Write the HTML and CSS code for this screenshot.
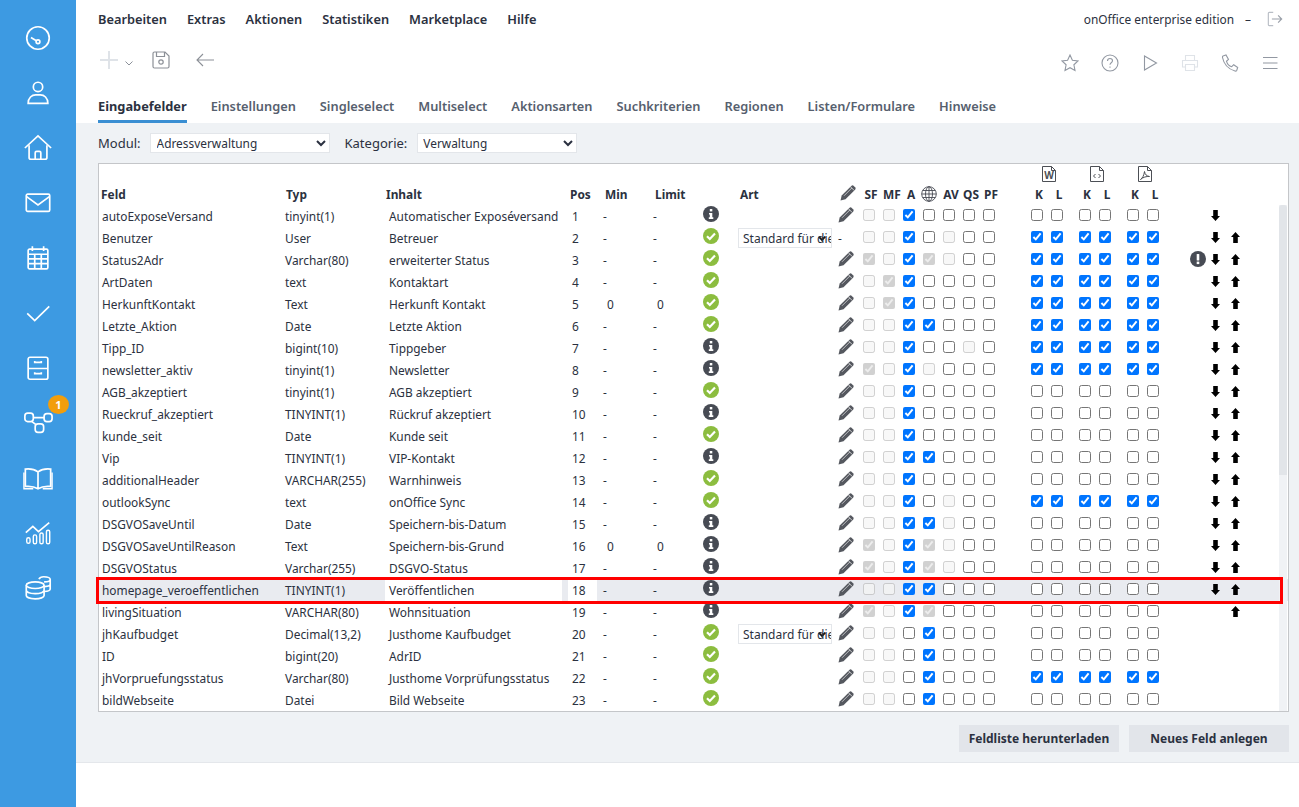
FILE: index.html
```html
<!DOCTYPE html>
<html lang="de">
<head>
  <meta charset="UTF-8">
  <title>Eingabefelder</title>
  <link rel="stylesheet" href="styles.css">
</head>
<body>

<svg class="defs">
  <symbol id="pen" viewBox="0 0 17 17"><path d="M.5 16.500l1.200-5L11.300 1.900a1.800 1.800 0 0 1 2.500 0l1.300 1.300a1.800 1.800 0 0 1 0 2.500L5.500 15.300z" fill="#55585f"/><path d="M4 11.800L11.800 4" stroke="#fff" stroke-width=".6" fill="none"/><path d="M10.500 2.800l3.700 3.700" stroke="#fff" stroke-width=".7"/></symbol>
  <symbol id="info" viewBox="0 0 16 16"><circle cx="8" cy="8" r="8" fill="#474b54"/><rect x="6.800" y="3" width="2.500" height="2.400" fill="#fff"/><path d="M6 7h3.300v4.300H10.300V13H5.800v-1.700h1V8.600H6z" fill="#fff"/></symbol>
  <symbol id="ok" viewBox="0 0 16 16"><circle cx="8" cy="8" r="8" fill="#8cbd3f"/><path d="M4 8.300l2.800 2.700L12 5.600" fill="none" stroke="#fff" stroke-width="2.200"/></symbol>
  <symbol id="warn" viewBox="0 0 16 16"><circle cx="8" cy="8" r="8" fill="#474b54"/><rect x="6.700" y="3" width="2.600" height="6.500" rx=".6" fill="#fff"/><rect x="6.700" y="10.600" width="2.600" height="2.500" fill="#fff"/></symbol>
  <symbol id="down" viewBox="0 0 9 11"><path d="M2.200 0h4.600v6H9L4.500 11 0 6h2.200z"/></symbol>
  <symbol id="up" viewBox="0 0 9 11"><path d="M2.200 11h4.600V5H9L4.500 0 0 5h2.200z"/></symbol>
</svg>

<div class="app">
  <nav class="sidebar">
    <a class="side-item"><svg viewBox="0 0 32 32"><circle cx="16" cy="16" r="12"/><circle cx="16" cy="20" r="2"/><path d="M14.200 19L8.500 15.500"/></svg></a>
    <a class="side-item"><svg viewBox="0 0 32 32"><circle cx="16" cy="9.500" r="5"/><path d="M5.500 27c0-6 4-9 8-9h5c4 0 8 3 8 9z"/></svg></a>
    <a class="side-item"><svg viewBox="0 0 32 32"><path d="M2 16L16 3 30 16"/><path d="M6.500 13v13a2 2 0 0 0 2 2h15a2 2 0 0 0 2-2V13"/><path d="M13 28v-7a1.500 1.500 0 0 1 1.500-1.500h3A1.500 1.500 0 0 1 19 21v7"/></svg></a>
    <a class="side-item"><svg viewBox="0 0 32 32"><rect x="3.500" y="6.500" width="25" height="18.500" rx="1.500"/><path d="M3.500 9l12.500 9 12.500-9"/></svg></a>
    <a class="side-item"><svg viewBox="0 0 32 32"><rect x="5.500" y="6.500" width="21" height="21" rx="1.500"/><path d="M10 3.500v5M22 3.500v5M5.500 12h21M5.500 17h21M5.500 22h21M12.500 12v15M19.500 12v15"/></svg></a>
    <a class="side-item"><svg viewBox="0 0 32 32"><path d="M4.500 16.500l8 7.500L28 9"/></svg></a>
    <a class="side-item"><svg viewBox="0 0 32 32"><rect x="5.500" y="4.500" width="21" height="23.500" rx="2"/><path d="M5.500 16.500h21M12.500 8.500v1.500h7V8.500M12.500 20.500V22h7v-1.500"/></svg></a>
    <a class="side-item"><svg viewBox="0 0 32 32"><rect x="2" y="5.500" width="9" height="9" rx="3"/><rect x="22.500" y="6" width="8.500" height="8.500" rx="3"/><rect x="13" y="17" width="9" height="9" rx="3"/><path d="M11 10.200h11.500M9.500 14.500l4 3"/></svg><span class="badge">1</span></a>
    <a class="side-item"><svg viewBox="0 0 32 32"><path d="M16 9.500C12 6.500 7 6 2.500 6.500V25c5-.5 9.500 0 13.500 2.500 4-2.500 8.500-3 13.500-2.500V6.500C25 6 20 6.500 16 9.500zM16 9.500v18"/><path d="M1 10v17.500h10M31 10v17.500H21" stroke-width="1.500"/></svg></a>
    <a class="side-item"><svg viewBox="0 0 32 32"><path d="M3 15.500L10.500 9l6 5.500L28 5" stroke-width="1.800"/><rect x="4" y="21" width="3.500" height="6" rx="1.700" stroke-width="1.500"/><rect x="11" y="18" width="3.500" height="9.500" rx="1.700" stroke-width="1.500"/><rect x="18" y="16" width="3.500" height="11.500" rx="1.700" stroke-width="1.500"/><rect x="25" y="13" width="3.500" height="14.500" rx="1.700" stroke-width="1.500"/></svg></a>
    <a class="side-item"><svg viewBox="0 0 32 32"><ellipse cx="13" cy="13" rx="9.500" ry="3.500"/><path d="M3.500 13v11c0 2 4 3.500 9.500 3.500s9.500-1.500 9.500-3.500V13M3.500 18.500c0 2 4 3.500 9.500 3.500s9.500-1.500 9.500-3.500"/><path d="M17 6.500c1-2 3-2.500 5-2.500 4 0 7 1.200 7 3v10c0 1.300-2.500 2.500-6.500 2.700M22.500 9.500c3.500 0 6.500-1 6.500-2.500M23 14.500c3.500-.2 6-1.200 6-2.500"/></svg></a>
  </nav>

  <div class="main">
    <header class="top">
      <div class="menubar">
        <a>Bearbeiten</a><a>Extras</a><a>Aktionen</a><a>Statistiken</a><a>Marketplace</a><a>Hilfe</a>
        <span class="edition">onOffice enterprise edition</span>
        <span class="edition-dash">–</span>
        <svg class="logout" viewBox="0 0 18 18"><path d="M7 1.500H2.500a1 1 0 0 0-1 1v13a1 1 0 0 0 1 1H7" stroke="#b9bec6"/><path d="M5.500 9H16.500M12.500 5l4 4-4 4" stroke="#9aa0a9"/></svg>
      </div>
      <div class="toolbar">
        <svg class="tool-plus" viewBox="0 0 18 18"><path d="M9 0v18M0 9h18"/></svg>
        <svg class="tool-chev" viewBox="0 0 8 5"><path d="M.5.500L4 4 7.500.500"/></svg>
        <svg class="tool-save" viewBox="0 0 18 18"><path d="M1 2.500a1.500 1.500 0 0 1 1.500-1.500H13l4 4v10.500a1.500 1.500 0 0 1-1.500 1.500h-13A1.500 1.500 0 0 1 1 15.500z"/><path d="M4.500 1v4.500h8V1"/><circle cx="9" cy="11" r="2.200"/></svg>
        <svg class="tool-back" viewBox="0 0 18 14"><path d="M18 7H1M7 1L1 7l6 6"/></svg>
        <div class="tool-right">
          <svg viewBox="0 0 18 18"><path d="M9 1l2.400 5.200 5.600.7-4.100 3.900 1.100 5.700L9 13.700l-5 2.800 1.100-5.700L1 6.900l5.600-.7z"/></svg>
          <svg viewBox="0 0 18 18"><circle cx="9" cy="9" r="8"/><path d="M6.500 7c0-1.500 1.100-2.500 2.500-2.500s2.500 1 2.500 2.300c0 2-2.500 2-2.500 4M9 12.500v1.200"/></svg>
          <svg viewBox="0 0 18 18"><path d="M3.500 2v14l12-7z"/></svg>
          <svg class="tool-light" viewBox="0 0 18 18"><path d="M4.500 6.500V1.500h9v5M4.500 13H1.500V6.500h15V13h-3M4.500 10.500h9v6h-9z"/></svg>
          <svg viewBox="0 0 18 18"><path d="M2 2l3-1 2.500 4.500-2 1.800c.6 2 3 4.700 5.200 5.400l2-2 4 2.800-1 3c-.3.5-1 .7-1.700.5C7 15 2.800 10 1.500 3.500 1.400 2.900 1.500 2.300 2 2z"/></svg>
          <svg viewBox="0 0 18 18"><path d="M2 3.500h14.500M2 9h14.500M2 14.500h14.500"/></svg>
        </div>
      </div>
      <div class="tabs">
        <a class="tab tab-active">Eingabefelder</a><a class="tab">Einstellungen</a><a class="tab">Singleselect</a><a class="tab">Multiselect</a><a class="tab">Aktionsarten</a><a class="tab">Suchkriterien</a><a class="tab">Regionen</a><a class="tab">Listen/Formulare</a><a class="tab">Hinweise</a>
      </div>
    </header>

    <section class="content">
      <div class="filters">
        <label>Modul:</label>
        <select class="sel-modul"><option>Adressverwaltung</option></select>
        <label>Kategorie:</label>
        <select class="sel-kat"><option>Verwaltung</option></select>
      </div>

      <div class="box">
        <table class="fields">
          <colgroup>
            <col class="w185"><col class="w101"><col class="w184"><col class="w31"><col class="w50"><col class="w50"><col class="w38"><col class="w100"><col class="w21">
            <col span="7" class="w20"><col class="w28"><col span="2" class="w20"><col class="w8"><col span="2" class="w20"><col class="w8"><col span="2" class="w20"><col class="w42"><col span="2" class="w20"><col>
          </colgroup>
          <thead>
            <tr class="head-icons">
              <th colspan="9"></th>
              <th colspan="8"></th>
              <th colspan="2"><svg class="file" viewBox="0 0 14 16"><path d="M.5.500h9l4 4v11H.5z"/><path d="M9.500.500v4h4"/><text x="7" y="12.500" class="file-w">W</text></svg></th>
              <th></th>
              <th colspan="2"><svg class="file" viewBox="0 0 14 16"><path d="M.5.500h9l4 4v11H.5z"/><path d="M9.500.500v4h4"/><path d="M5.500 8L3.500 10l2 2M8.500 8l2 2-2 2"/></svg></th>
              <th></th>
              <th colspan="2"><svg class="file" viewBox="0 0 14 16"><path d="M.5.500h9l4 4v11H.5z"/><path d="M9.500.500v4h4"/><path d="M2.500 13.500c2-1.500 3.500-4 4-8 .5 3 2 4.500 5 5-3-.3-6.500.7-9 3z"/></svg></th>
              <th colspan="4"></th>
            </tr>
            <tr class="head-labels">
              <th class="tl">Feld</th><th class="tl">Typ</th><th class="tl">Inhalt</th><th class="tl">Pos</th><th class="tl th-min">Min</th><th class="tl th-min">Limit</th><th></th><th class="tl">Art</th>
              <th class="th-pen"><svg class="icon-pen"><use href="#pen"/></svg></th>
              <th>SF</th><th>MF</th><th>A</th>
              <th><svg class="globe" viewBox="0 0 16 16"><circle cx="8" cy="8" r="7.300"/><ellipse cx="8" cy="8" rx="3.500" ry="7.300"/><path d="M.7 8h14.600M8 .7v14.600M1.700 4.500h12.600M1.700 11.500h12.600"/></svg></th>
              <th>AV</th><th>QS</th><th>PF</th><th></th>
              <th>K</th><th>L</th><th></th><th>K</th><th>L</th><th></th><th>K</th><th>L</th><th colspan="4"></th>
            </tr>
          </thead>
          <tbody>
            <tr><td>autoExposeVersand<td>tinyint(1)<td class="inhalt"><span>Automatischer Exposéversand</span><td class="pos"><span>1</span><td>-<td>-<td><svg class="icon-st"><use href="#info"/></svg><td><td><svg class="icon-pen"><use href="#pen"/></svg><td><input type="checkbox" disabled><td><input type="checkbox" disabled><td><input type="checkbox" checked><td><input type="checkbox"><td><input type="checkbox"><td><input type="checkbox"><td><input type="checkbox"><td><td><input type="checkbox"><td><input type="checkbox"><td><td><input type="checkbox"><td><input type="checkbox"><td><td><input type="checkbox"><td><input type="checkbox"><td><td><svg class="arrow"><use href="#down"/></svg><td><td></tr>
            <tr><td>Benutzer<td>User<td class="inhalt"><span>Betreuer</span><td class="pos"><span>2</span><td>-<td>-<td><svg class="icon-st"><use href="#ok"/></svg><td><select class="sel-art"><option>Standard für die Suche</option></select><td class="no-pen">-<td><input type="checkbox" disabled><td><input type="checkbox" disabled><td><input type="checkbox" checked><td><input type="checkbox"><td><input type="checkbox" disabled><td><input type="checkbox"><td><input type="checkbox"><td><td><input type="checkbox" checked><td><input type="checkbox" checked><td><td><input type="checkbox" checked><td><input type="checkbox" checked><td><td><input type="checkbox" checked><td><input type="checkbox" checked><td><td><svg class="arrow"><use href="#down"/></svg><td><svg class="arrow"><use href="#up"/></svg><td></tr>
            <tr><td>Status2Adr<td>Varchar(80)<td class="inhalt"><span>erweiterter Status</span><td class="pos"><span>3</span><td>-<td>-<td><svg class="icon-st"><use href="#ok"/></svg><td><td><svg class="icon-pen"><use href="#pen"/></svg><td><input type="checkbox" checked disabled><td><input type="checkbox" disabled><td><input type="checkbox" checked><td><input type="checkbox" checked disabled><td><input type="checkbox" disabled><td><input type="checkbox"><td><input type="checkbox"><td><td><input type="checkbox" checked><td><input type="checkbox" checked><td><td><input type="checkbox" checked><td><input type="checkbox" checked><td><td><input type="checkbox" checked><td><input type="checkbox" checked><td class="warn"><svg class="icon-st"><use href="#warn"/></svg><td><svg class="arrow"><use href="#down"/></svg><td><svg class="arrow"><use href="#up"/></svg><td></tr>
            <tr><td>ArtDaten<td>text<td class="inhalt"><span>Kontaktart</span><td class="pos"><span>4</span><td>-<td>-<td><svg class="icon-st"><use href="#ok"/></svg><td><td><svg class="icon-pen"><use href="#pen"/></svg><td><input type="checkbox" disabled><td><input type="checkbox" checked disabled><td><input type="checkbox" checked><td><input type="checkbox"><td><input type="checkbox"><td><input type="checkbox"><td><input type="checkbox"><td><td><input type="checkbox" checked><td><input type="checkbox" checked><td><td><input type="checkbox" checked><td><input type="checkbox" checked><td><td><input type="checkbox" checked><td><input type="checkbox" checked><td><td><svg class="arrow"><use href="#down"/></svg><td><svg class="arrow"><use href="#up"/></svg><td></tr>
            <tr><td>HerkunftKontakt<td>Text<td class="inhalt"><span>Herkunft Kontakt</span><td class="pos"><span>5</span><td class="zero">0<td class="zero">0<td><svg class="icon-st"><use href="#ok"/></svg><td><td><svg class="icon-pen"><use href="#pen"/></svg><td><input type="checkbox" disabled><td><input type="checkbox" checked disabled><td><input type="checkbox" checked><td><input type="checkbox"><td><input type="checkbox"><td><input type="checkbox"><td><input type="checkbox"><td><td><input type="checkbox" checked><td><input type="checkbox" checked><td><td><input type="checkbox" checked><td><input type="checkbox" checked><td><td><input type="checkbox" checked><td><input type="checkbox" checked><td><td><svg class="arrow"><use href="#down"/></svg><td><svg class="arrow"><use href="#up"/></svg><td></tr>
            <tr><td>Letzte_Aktion<td>Date<td class="inhalt"><span>Letzte Aktion</span><td class="pos"><span>6</span><td>-<td>-<td><svg class="icon-st"><use href="#ok"/></svg><td><td><svg class="icon-pen"><use href="#pen"/></svg><td><input type="checkbox" disabled><td><input type="checkbox" disabled><td><input type="checkbox" checked><td><input type="checkbox" checked><td><input type="checkbox"><td><input type="checkbox"><td><input type="checkbox"><td><td><input type="checkbox" checked><td><input type="checkbox" checked><td><td><input type="checkbox" checked><td><input type="checkbox" checked><td><td><input type="checkbox" checked><td><input type="checkbox" checked><td><td><svg class="arrow"><use href="#down"/></svg><td><svg class="arrow"><use href="#up"/></svg><td></tr>
            <tr><td>Tipp_ID<td>bigint(10)<td class="inhalt"><span>Tippgeber</span><td class="pos"><span>7</span><td>-<td>-<td><svg class="icon-st"><use href="#info"/></svg><td><td><svg class="icon-pen"><use href="#pen"/></svg><td><input type="checkbox" disabled><td><input type="checkbox" disabled><td><input type="checkbox" checked><td><input type="checkbox"><td><input type="checkbox"><td><input type="checkbox" disabled><td><input type="checkbox"><td><td><input type="checkbox" checked><td><input type="checkbox" checked><td><td><input type="checkbox" checked><td><input type="checkbox" checked><td><td><input type="checkbox" checked><td><input type="checkbox" checked><td><td><svg class="arrow"><use href="#down"/></svg><td><svg class="arrow"><use href="#up"/></svg><td></tr>
            <tr><td>newsletter_aktiv<td>tinyint(1)<td class="inhalt"><span>Newsletter</span><td class="pos"><span>8</span><td>-<td>-<td><svg class="icon-st"><use href="#info"/></svg><td><td><svg class="icon-pen"><use href="#pen"/></svg><td><input type="checkbox" checked disabled><td><input type="checkbox" disabled><td><input type="checkbox" checked><td><input type="checkbox" disabled><td><input type="checkbox"><td><input type="checkbox"><td><input type="checkbox"><td><td><input type="checkbox" checked><td><input type="checkbox" checked><td><td><input type="checkbox" checked><td><input type="checkbox" checked><td><td><input type="checkbox" checked><td><input type="checkbox" checked><td><td><svg class="arrow"><use href="#down"/></svg><td><svg class="arrow"><use href="#up"/></svg><td></tr>
            <tr><td>AGB_akzeptiert<td>tinyint(1)<td class="inhalt"><span>AGB akzeptiert</span><td class="pos"><span>9</span><td>-<td>-<td><svg class="icon-st"><use href="#ok"/></svg><td><td><svg class="icon-pen"><use href="#pen"/></svg><td><input type="checkbox" disabled><td><input type="checkbox" disabled><td><input type="checkbox" checked><td><input type="checkbox"><td><input type="checkbox"><td><input type="checkbox"><td><input type="checkbox"><td><td><input type="checkbox"><td><input type="checkbox"><td><td><input type="checkbox"><td><input type="checkbox"><td><td><input type="checkbox"><td><input type="checkbox"><td><td><svg class="arrow"><use href="#down"/></svg><td><svg class="arrow"><use href="#up"/></svg><td></tr>
            <tr><td>Rueckruf_akzeptiert<td>TINYINT(1)<td class="inhalt"><span>Rückruf akzeptiert</span><td class="pos"><span>10</span><td>-<td>-<td><svg class="icon-st"><use href="#info"/></svg><td><td><svg class="icon-pen"><use href="#pen"/></svg><td><input type="checkbox" disabled><td><input type="checkbox" disabled><td><input type="checkbox" checked><td><input type="checkbox"><td><input type="checkbox"><td><input type="checkbox"><td><input type="checkbox"><td><td><input type="checkbox"><td><input type="checkbox"><td><td><input type="checkbox"><td><input type="checkbox"><td><td><input type="checkbox"><td><input type="checkbox"><td><td><svg class="arrow"><use href="#down"/></svg><td><svg class="arrow"><use href="#up"/></svg><td></tr>
            <tr><td>kunde_seit<td>Date<td class="inhalt"><span>Kunde seit</span><td class="pos"><span>11</span><td>-<td>-<td><svg class="icon-st"><use href="#ok"/></svg><td><td><svg class="icon-pen"><use href="#pen"/></svg><td><input type="checkbox" disabled><td><input type="checkbox" disabled><td><input type="checkbox" checked><td><input type="checkbox"><td><input type="checkbox"><td><input type="checkbox"><td><input type="checkbox"><td><td><input type="checkbox"><td><input type="checkbox"><td><td><input type="checkbox"><td><input type="checkbox"><td><td><input type="checkbox"><td><input type="checkbox"><td><td><svg class="arrow"><use href="#down"/></svg><td><svg class="arrow"><use href="#up"/></svg><td></tr>
            <tr><td>Vip<td>TINYINT(1)<td class="inhalt"><span>VIP-Kontakt</span><td class="pos"><span>12</span><td>-<td>-<td><svg class="icon-st"><use href="#info"/></svg><td><td><svg class="icon-pen"><use href="#pen"/></svg><td><input type="checkbox" disabled><td><input type="checkbox" disabled><td><input type="checkbox" checked><td><input type="checkbox" checked><td><input type="checkbox"><td><input type="checkbox"><td><input type="checkbox"><td><td><input type="checkbox"><td><input type="checkbox"><td><td><input type="checkbox"><td><input type="checkbox"><td><td><input type="checkbox"><td><input type="checkbox"><td><td><svg class="arrow"><use href="#down"/></svg><td><svg class="arrow"><use href="#up"/></svg><td></tr>
            <tr><td>additionalHeader<td>VARCHAR(255)<td class="inhalt"><span>Warnhinweis</span><td class="pos"><span>13</span><td>-<td>-<td><svg class="icon-st"><use href="#ok"/></svg><td><td><svg class="icon-pen"><use href="#pen"/></svg><td><input type="checkbox" disabled><td><input type="checkbox" disabled><td><input type="checkbox" checked><td><input type="checkbox"><td><input type="checkbox"><td><input type="checkbox"><td><input type="checkbox"><td><td><input type="checkbox"><td><input type="checkbox"><td><td><input type="checkbox"><td><input type="checkbox"><td><td><input type="checkbox"><td><input type="checkbox"><td><td><svg class="arrow"><use href="#down"/></svg><td><svg class="arrow"><use href="#up"/></svg><td></tr>
            <tr><td>outlookSync<td>text<td class="inhalt"><span>onOffice Sync</span><td class="pos"><span>14</span><td>-<td>-<td><svg class="icon-st"><use href="#ok"/></svg><td><td><svg class="icon-pen"><use href="#pen"/></svg><td><input type="checkbox" disabled><td><input type="checkbox" disabled><td><input type="checkbox" checked><td><input type="checkbox"><td><input type="checkbox" disabled><td><input type="checkbox"><td><input type="checkbox"><td><td><input type="checkbox" checked><td><input type="checkbox" checked><td><td><input type="checkbox" checked><td><input type="checkbox" checked><td><td><input type="checkbox" checked><td><input type="checkbox" checked><td><td><svg class="arrow"><use href="#down"/></svg><td><svg class="arrow"><use href="#up"/></svg><td></tr>
            <tr><td>DSGVOSaveUntil<td>Date<td class="inhalt"><span>Speichern-bis-Datum</span><td class="pos"><span>15</span><td>-<td>-<td><svg class="icon-st"><use href="#info"/></svg><td><td><svg class="icon-pen"><use href="#pen"/></svg><td><input type="checkbox" disabled><td><input type="checkbox" disabled><td><input type="checkbox" checked><td><input type="checkbox" checked><td><input type="checkbox" disabled><td><input type="checkbox"><td><input type="checkbox"><td><td><input type="checkbox"><td><input type="checkbox"><td><td><input type="checkbox"><td><input type="checkbox"><td><td><input type="checkbox"><td><input type="checkbox"><td><td><svg class="arrow"><use href="#down"/></svg><td><svg class="arrow"><use href="#up"/></svg><td></tr>
            <tr><td>DSGVOSaveUntilReason<td>Text<td class="inhalt"><span>Speichern-bis-Grund</span><td class="pos"><span>16</span><td class="zero">0<td class="zero">0<td><svg class="icon-st"><use href="#info"/></svg><td><td><svg class="icon-pen"><use href="#pen"/></svg><td><input type="checkbox" checked disabled><td><input type="checkbox" disabled><td><input type="checkbox" checked><td><input type="checkbox" checked disabled><td><input type="checkbox" disabled><td><input type="checkbox"><td><input type="checkbox"><td><td><input type="checkbox"><td><input type="checkbox"><td><td><input type="checkbox"><td><input type="checkbox"><td><td><input type="checkbox"><td><input type="checkbox"><td><td><svg class="arrow"><use href="#down"/></svg><td><svg class="arrow"><use href="#up"/></svg><td></tr>
            <tr><td>DSGVOStatus<td>Varchar(255)<td class="inhalt"><span>DSGVO-Status</span><td class="pos"><span>17</span><td>-<td>-<td><svg class="icon-st"><use href="#info"/></svg><td><td><svg class="icon-pen"><use href="#pen"/></svg><td><input type="checkbox" checked disabled><td><input type="checkbox" disabled><td><input type="checkbox" checked><td><input type="checkbox" checked disabled><td><input type="checkbox" disabled><td><input type="checkbox"><td><input type="checkbox"><td><td><input type="checkbox"><td><input type="checkbox"><td><td><input type="checkbox"><td><input type="checkbox"><td><td><input type="checkbox"><td><input type="checkbox"><td><td><svg class="arrow"><use href="#down"/></svg><td><svg class="arrow"><use href="#up"/></svg><td></tr>
            <tr class="row-marked"><td>homepage_veroeffentlichen<td>TINYINT(1)<td class="inhalt"><span>Veröffentlichen</span><td class="pos"><span>18</span><td>-<td>-<td><svg class="icon-st"><use href="#info"/></svg><td><td><svg class="icon-pen"><use href="#pen"/></svg><td><input type="checkbox" disabled><td><input type="checkbox" disabled><td><input type="checkbox" checked><td><input type="checkbox" checked><td><input type="checkbox"><td><input type="checkbox"><td><input type="checkbox"><td><td><input type="checkbox"><td><input type="checkbox"><td><td><input type="checkbox"><td><input type="checkbox"><td><td><input type="checkbox"><td><input type="checkbox"><td><td><svg class="arrow"><use href="#down"/></svg><td><svg class="arrow"><use href="#up"/></svg><td></tr>
            <tr><td>livingSituation<td>VARCHAR(80)<td class="inhalt"><span>Wohnsituation</span><td class="pos"><span>19</span><td>-<td>-<td><svg class="icon-st"><use href="#info"/></svg><td><td><svg class="icon-pen"><use href="#pen"/></svg><td><input type="checkbox" checked disabled><td><input type="checkbox" disabled><td><input type="checkbox" checked><td><input type="checkbox" checked disabled><td><input type="checkbox"><td><input type="checkbox"><td><input type="checkbox"><td><td><input type="checkbox"><td><input type="checkbox"><td><td><input type="checkbox"><td><input type="checkbox"><td><td><input type="checkbox"><td><input type="checkbox"><td><td><td><svg class="arrow"><use href="#up"/></svg><td></tr>
            <tr><td>jhKaufbudget<td>Decimal(13,2)<td class="inhalt"><span>Justhome Kaufbudget</span><td class="pos"><span>20</span><td>-<td>-<td><svg class="icon-st"><use href="#ok"/></svg><td><select class="sel-art"><option>Standard für die Suche</option></select><td><svg class="icon-pen"><use href="#pen"/></svg><td><input type="checkbox" disabled><td><input type="checkbox" disabled><td><input type="checkbox"><td><input type="checkbox" checked><td><input type="checkbox"><td><input type="checkbox"><td><input type="checkbox"><td><td><input type="checkbox"><td><input type="checkbox"><td><td><input type="checkbox"><td><input type="checkbox"><td><td><input type="checkbox"><td><input type="checkbox"><td><td><td><td></tr>
            <tr><td>ID<td>bigint(20)<td class="inhalt"><span>AdrID</span><td class="pos"><span>21</span><td>-<td>-<td><svg class="icon-st"><use href="#ok"/></svg><td><td><svg class="icon-pen"><use href="#pen"/></svg><td><input type="checkbox" disabled><td><input type="checkbox" disabled><td><input type="checkbox"><td><input type="checkbox" checked><td><input type="checkbox"><td><input type="checkbox"><td><input type="checkbox"><td><td><input type="checkbox"><td><input type="checkbox"><td><td><input type="checkbox"><td><input type="checkbox"><td><td><input type="checkbox"><td><input type="checkbox"><td><td><td><td></tr>
            <tr><td>jhVorpruefungsstatus<td>Varchar(80)<td class="inhalt"><span>Justhome Vorprüfungsstatus</span><td class="pos"><span>22</span><td>-<td>-<td><svg class="icon-st"><use href="#ok"/></svg><td><td><svg class="icon-pen"><use href="#pen"/></svg><td><input type="checkbox" disabled><td><input type="checkbox" disabled><td><input type="checkbox"><td><input type="checkbox" checked><td><input type="checkbox"><td><input type="checkbox"><td><input type="checkbox"><td><td><input type="checkbox" checked><td><input type="checkbox" checked><td><td><input type="checkbox" checked><td><input type="checkbox" checked><td><td><input type="checkbox" checked><td><input type="checkbox" checked><td><td><td><td></tr>
            <tr><td>bildWebseite<td>Datei<td class="inhalt"><span>Bild Webseite</span><td class="pos"><span>23</span><td>-<td>-<td><svg class="icon-st"><use href="#ok"/></svg><td><td><svg class="icon-pen"><use href="#pen"/></svg><td><input type="checkbox" disabled><td><input type="checkbox" disabled><td><input type="checkbox"><td><input type="checkbox" checked><td><input type="checkbox"><td><input type="checkbox"><td><input type="checkbox"><td><td><input type="checkbox"><td><input type="checkbox"><td><td><input type="checkbox"><td><input type="checkbox"><td><td><input type="checkbox"><td><input type="checkbox"><td><td><td><td></tr>
          </tbody>
        </table>
        <div class="scrollbar"><div class="scrollbar-thumb"></div></div>
        <div class="marker"></div>
      </div>

      <div class="actions">
        <button class="btn">Feldliste herunterladen</button>
        <button class="btn">Neues Feld anlegen</button>
      </div>
    </section>

    <footer class="foot"></footer>
  </div>
</div>

</body>
</html>
```

FILE: styles.css
```css
* {
  box-sizing: border-box;
}
body {
  margin: 0;
  font-family: "Noto Sans", "Open Sans", sans-serif;
  font-size: 11.900px;
  color: #2b3140;
  background: #fff;
}
.defs {
  display: none;
}
.app {
  display: flex;
  height: 807px;
  overflow: hidden;
}

/* sidebar */
.sidebar {
  width: 76px;
  flex: none;
  padding-top: 10px;
  background: #3d9ae2;
}
.side-item {
  display: flex;
  align-items: center;
  justify-content: center;
  height: 55px;
  position: relative;
}
.side-item svg {
  width: 30px;
  height: 30px;
  fill: none;
  stroke: #fff;
  stroke-width: 1.800;
}
.badge {
  position: absolute;
  left: 48px;
  top: 0;
  width: 21px;
  height: 19px;
  border-radius: 50%;
  background: #f29e0c;
  color: #fff;
  font-size: 11px;
  font-weight: 700;
  line-height: 19px;
  text-align: center;
}

/* top area */
.main {
  flex: 1;
  display: flex;
  flex-direction: column;
  min-width: 0;
}
.top {
  height: 123px;
  flex: none;
  padding: 0 16px 0 22px;
}
.menubar {
  display: flex;
  align-items: center;
  gap: 20px;
  height: 38px;
  font-size: 12.800px;
  font-weight: 600;
}
.edition {
  margin-left: auto;
  font-size: 11.900px;
  font-weight: 400;
}
.edition-dash {
  margin-left: -9px;
  font-size: 11.900px;
  font-weight: 400;
}
.logout {
  width: 16px;
  height: 16px;
  margin-left: -4px;
  fill: none;
  stroke-width: 1.300;
}
.toolbar {
  display: flex;
  align-items: center;
  height: 47px;
  padding-bottom: 3px;
}
.toolbar svg {
  fill: none;
}
.tool-plus {
  width: 18px;
  height: 18px;
  margin-left: 2px;
  stroke: #dfe3e8;
  stroke-width: 2;
}
.tool-chev {
  width: 8px;
  height: 5px;
  margin: 6px 0 0 7px;
  stroke: #8b9099;
}
.tool-save {
  width: 18px;
  height: 18px;
  margin-left: 19px;
  stroke: #8c9097;
  stroke-width: 1.200;
}
.tool-back {
  width: 18px;
  height: 14px;
  margin-left: 26px;
  stroke: #8c9097;
  stroke-width: 1.100;
}
.tool-right {
  display: flex;
  gap: 22px;
  margin: 0 4px 0 auto;
  padding-top: 6px;
}
.tool-right svg {
  width: 18px;
  height: 18px;
  stroke: #9298a2;
  stroke-width: 1.100;
}
.tool-right .tool-light {
  stroke: #dfe3e8;
}
.tabs {
  display: flex;
  gap: 24px;
  height: 38px;
}
.tab {
  padding-top: 12px;
  font-size: 12.800px;
  font-weight: 600;
  color: #56606e;
}
.tab-active {
  color: #2b3140;
  font-weight: 700;
  border-bottom: 3px solid #3a8fd3;
}

/* content */
.content {
  flex: none;
  height: 639px;
  padding: 10px 10px 0 22px;
  background: #eff2f5;
}
.filters {
  display: flex;
  align-items: center;
  gap: 15px;
  height: 20px;
  font-size: 13px;
}
.filters label {
  margin-right: -6px;
}
select {
  height: 20px;
  padding: 0 0 0 2px;
  border: 1px solid #e3e6ea;
  border-radius: 0;
  background: #fff;
  color: #2b3140;
  font-family: inherit;
  font-size: 11.900px;
}
.sel-modul {
  width: 180px;
}
.sel-kat {
  width: 160px;
  margin-left: 1px;
  padding-left: 1px;
}
.sel-art {
  display: block;
  width: 94px;
  padding-left: 4px;
  appearance: none;
  font-size: 12px;
  background: #fff url("data:image/svg+xml,%3Csvg xmlns='http://www.w3.org/2000/svg' width='8' height='5'%3E%3Cpath d='M.7.700L4 4 7.300.700' fill='none' stroke='%23111' stroke-width='1.800'/%3E%3C/svg%3E") no-repeat right 5px center;
}
.box {
  position: relative;
  height: 549px;
  margin-top: 10px;
  border: 1px solid #c4c6c9;
  background: #fff;
}

/* field table */
.fields {
  width: 100%;
  border-collapse: collapse;
  table-layout: fixed;
}
.w185 { width: 185px; }
.w101 { width: 101px; }
.w184 { width: 184px; }
.w100 { width: 100px; }
.w50 { width: 50px; }
.w42 { width: 42px; }
.w38 { width: 38px; }
.w31 { width: 31px; }
.w28 { width: 28px; }
.w21 { width: 21px; }
.w20 { width: 20px; }
.w8 { width: 8px; }

.fields th,
.fields td {
  padding: 0;
  white-space: nowrap;
  vertical-align: middle;
}
.head-icons {
  height: 20px;
}
.head-labels {
  height: 21px;
}
.fields th {
  padding-left: 4px;
  text-align: center;
  font-weight: 700;
}
.fields .head-labels th {
  padding-bottom: 2px;
}
.fields .tl {
  padding-left: 2px;
  text-align: left;
}
.head-labels th:nth-child(3),
.head-labels th:nth-child(4) {
  padding-left: 1px;
}
.fields .th-min {
  padding-left: 5px;
}
.fields .th-pen {
  padding: 0;
}
.th-pen .icon-pen {
  margin: -3px 0 0 2px;
}
.fields tbody tr {
  height: 22px;
}
.fields td {
  text-align: center;
}
.fields td:nth-child(-n+8) {
  text-align: left;
}
.fields td:nth-child(1) {
  padding-left: 3px;
}
.fields td:nth-child(2) {
  padding-left: 1px;
}
.fields td:nth-child(5),
.fields td:nth-child(6) {
  padding-left: 3px;
}
.fields td:nth-child(7) {
  padding-left: 3px;
}
.fields td.zero {
  padding-left: 7px;
}
.fields td.no-pen {
  text-align: left;
}
.inhalt span {
  display: block;
  width: 177px;
  padding-left: 4px;
  line-height: 22px;
}
.pos span {
  display: block;
  width: 29px;
  margin-left: -1px;
  padding-left: 4px;
  line-height: 22px;
}
.row-marked {
  background: #e9ebf0;
}
.row-marked span {
  background: #fff;
}
input[type="checkbox"] {
  display: block;
  width: 12px;
  height: 12px;
  margin: 0 auto 2px;
}
.icon-pen {
  display: block;
  width: 17px;
  height: 17px;
  margin-bottom: 4px;
}
.icon-st {
  display: block;
  width: 16px;
  height: 16px;
  margin-bottom: 4px;
}
.warn .icon-st {
  margin-left: 27px;
  margin-bottom: 2px;
}
.arrow {
  display: block;
  width: 9px;
  height: 11px;
  margin: 0 auto 1px;
}
.file {
  display: block;
  width: 14px;
  height: 16px;
  margin: 0 auto;
  fill: none;
  stroke: #4c4f55;
  stroke-width: 1;
}
.file-w {
  font-size: 10px;
  font-weight: 700;
  text-anchor: middle;
  fill: #4c4f55;
  stroke: none;
}
.globe {
  display: block;
  width: 16px;
  height: 16px;
  margin: 0 auto;
  transform: translateX(-2px);
  fill: none;
  stroke: #474b54;
  stroke-width: .9;
}
.scrollbar {
  position: absolute;
  right: 1px;
  top: 41px;
  bottom: 0;
  width: 8px;
  background: #f0f2f5;
}
.scrollbar-thumb {
  height: 270px;
  border-radius: 3px 3px 0 0;
  background: #e2e5e9;
}
.marker {
  position: absolute;
  left: -3px;
  top: 413px;
  width: 1187px;
  height: 27px;
  border: 3px solid #f00;
  pointer-events: none;
}

/* buttons and footer */
.actions {
  display: flex;
  justify-content: flex-end;
  gap: 10px;
  margin-top: 13px;
}
.btn {
  width: 160px;
  height: 27px;
  padding: 0;
  border: none;
  background: #e2e5ea;
  color: #2b3140;
  font-family: inherit;
  font-size: 12px;
  font-weight: 700;
}
.foot {
  flex: 1;
  border-top: 1px solid #e4e7eb;
}
```
